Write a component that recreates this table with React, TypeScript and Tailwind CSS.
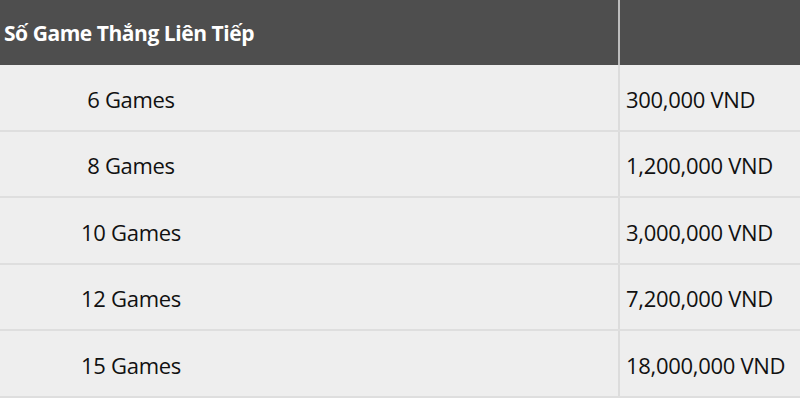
import React from "react";

const rows = [
  { games: "6 Games", prize: "300,000 VND" },
  { games: "8 Games", prize: "1,200,000 VND" },
  { games: "10 Games", prize: "3,000,000 VND" },
  { games: "12 Games", prize: "7,200,000 VND" },
  { games: "15 Games", prize: "18,000,000 VND" },
];

export default function App() {
  return (
    <div
      className="w-[800px] h-[400px] bg-white overflow-hidden"
      style={{ fontFamily: '"Open Sans", "Liberation Sans", sans-serif' }}
    >
      {/* Header */}
      <div className="flex h-[65px] bg-[#4e4e4e]">
        <div className="w-[618px] flex items-center pl-[4px] pt-[2px] text-white font-bold text-[21px] tracking-[-0.45px]">
          Số Game Thắng Liên Tiếp
        </div>
        <div className="w-[2px] bg-[#bdbdbd]" />
        <div className="flex-1" />
      </div>

      {/* Rows */}
      {rows.map((row) => (
        <div
          key={row.games}
          className="flex h-[66.5px] bg-[#eeeeee] border-b-2 border-[#dedede]"
        >
          <div className="w-[618px] flex items-center pt-[4px]">
            <div className="w-[262px] text-center text-[22px] tracking-[-0.3px] text-[#111]">
              {row.games}
            </div>
          </div>
          <div className="w-[2px] bg-[#dcdcdc]" />
          <div className="flex-1 flex items-center pl-[6px] pt-[4px] text-[22px] tracking-[-0.3px] text-[#111]">
            {row.prize}
          </div>
        </div>
      ))}
    </div>
  );
}
